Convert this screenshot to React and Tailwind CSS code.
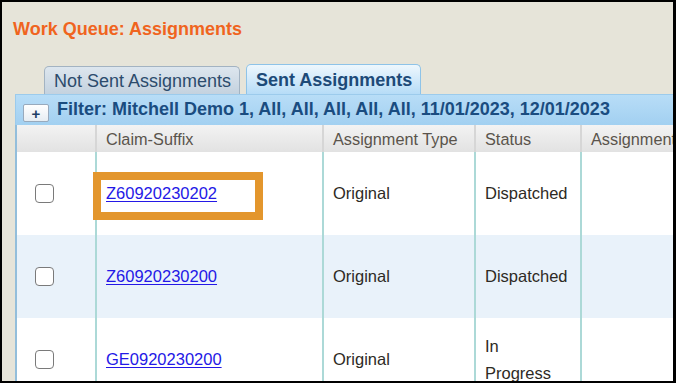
import React from "react";

const rows = [
  { claim: "Z60920230202", type: "Original", status: ["Dispatched"], bg: "bg-white", box: true },
  { claim: "Z60920230200", type: "Original", status: ["Dispatched"], bg: "bg-[#e9f2fa]" },
  { claim: "GE0920230200", type: "Original", status: ["In", "Progress"], bg: "bg-white" },
];

function Checkbox() {
  return (
    <div className="ml-[18px] h-[19px] w-[19px] rounded-[4px] border-[1.5px] border-[#7a7a7a] bg-white" />
  );
}

export default function App() {
  return (
    <div className="relative h-[383px] w-[676px] overflow-hidden border-2 border-r-[3px] border-black bg-[#e6e4d9] font-['Liberation_Sans',Arial,sans-serif]">
      <div className="pl-[11px] pt-[17px] text-[18px] font-bold leading-[20px] text-[#f0641e]">
        Work Queue: Assignments
      </div>

      <div className="mt-[25px] flex items-end pl-[42px]">
        <div className="flex h-[28px] w-[196px] items-center rounded-t-[5px] border border-b-0 border-[#a3b3c2] bg-gradient-to-b from-[#dde6ee] to-[#c4d2df] pl-[9px] text-[18px] leading-[20px] text-[#2c4b6c]">
          Not Sent Assignments
        </div>
        <div className="ml-[6px] flex h-[30px] w-[175px] items-center rounded-t-[5px] border border-b-0 border-[#8ec3e8] bg-gradient-to-b from-[#eef7fd] to-[#b6dcf7] pl-[9px] text-[18px] font-bold leading-[20px] text-[#1d4a78] whitespace-nowrap">
          Sent Assignments
        </div>
      </div>

      <div className="ml-[13px] flex h-[31px] border-l border-t border-[#9ccbec] bg-gradient-to-b from-[#b8ddf7] to-[#a2d0f1]">
        <div className="ml-[7px] mt-[9px] flex h-[18px] w-[26px] items-center justify-center rounded-[2px] border border-[#98aabd] bg-gradient-to-b from-white to-[#e6edf3] text-[15px] font-bold leading-none text-[#1d3f66]">
          +
        </div>
        <div className="ml-[8px] mt-[4px] text-[18px] font-bold leading-[20px] text-[#1a4c80] whitespace-nowrap">
          Filter: Mitchell Demo 1, All, All, All, All, All, 11/01/2023, 12/01/2023
        </div>
      </div>

      <div className="ml-[13px] w-[700px] border-l-2 border-[#93bedb]">
        <div className="grid h-[27px] grid-cols-[78px_227px_152px_106px_1fr] bg-gradient-to-b from-[#f3f3f3] to-[#e2e2e2] text-[16.3px] leading-[20px] text-[#5a544c]">
          <div />
          <div className="flex items-center border-l-2 border-[#d6d6d6] pl-[9px]">Claim-Suffix</div>
          <div className="flex items-center border-l-2 border-[#d6d6d6] pl-[9px]">Assignment Type</div>
          <div className="flex items-center border-l-2 border-[#d6d6d6] pl-[9px]">Status</div>
          <div className="flex items-center border-l-2 border-[#d6d6d6] pl-[9px] whitespace-nowrap">Assignment Date</div>
        </div>
        {rows.map((r) => (
          <div
            key={r.claim}
            className={`grid h-[83px] grid-cols-[78px_227px_152px_106px_1fr] ${r.bg} text-[16.5px] leading-[27px] text-[#2e2a24]`}
          >
            <div className="flex items-center">
              <Checkbox />
            </div>
            <div className="relative flex items-center border-l-2 border-[#acd9d7] pl-[9px]">
              <span className="text-[#2418e6] underline decoration-1 underline-offset-2">{r.claim}</span>
              {r.box && (
                <div className="absolute left-[-4px] top-[20px] h-[48px] w-[170px] border-[8px] border-[#e3962d]" />
              )}
            </div>
            <div className="flex items-center border-l-2 border-[#acd9d7] pl-[9px]">{r.type}</div>
            <div className="flex flex-col justify-center border-l-2 border-[#acd9d7] pl-[9px]">
              {r.status.map((s) => (
                <span key={s}>{s}</span>
              ))}
            </div>
            <div className="border-l-2 border-[#acd9d7]" />
          </div>
        ))}
      </div>
    </div>
  );
}
